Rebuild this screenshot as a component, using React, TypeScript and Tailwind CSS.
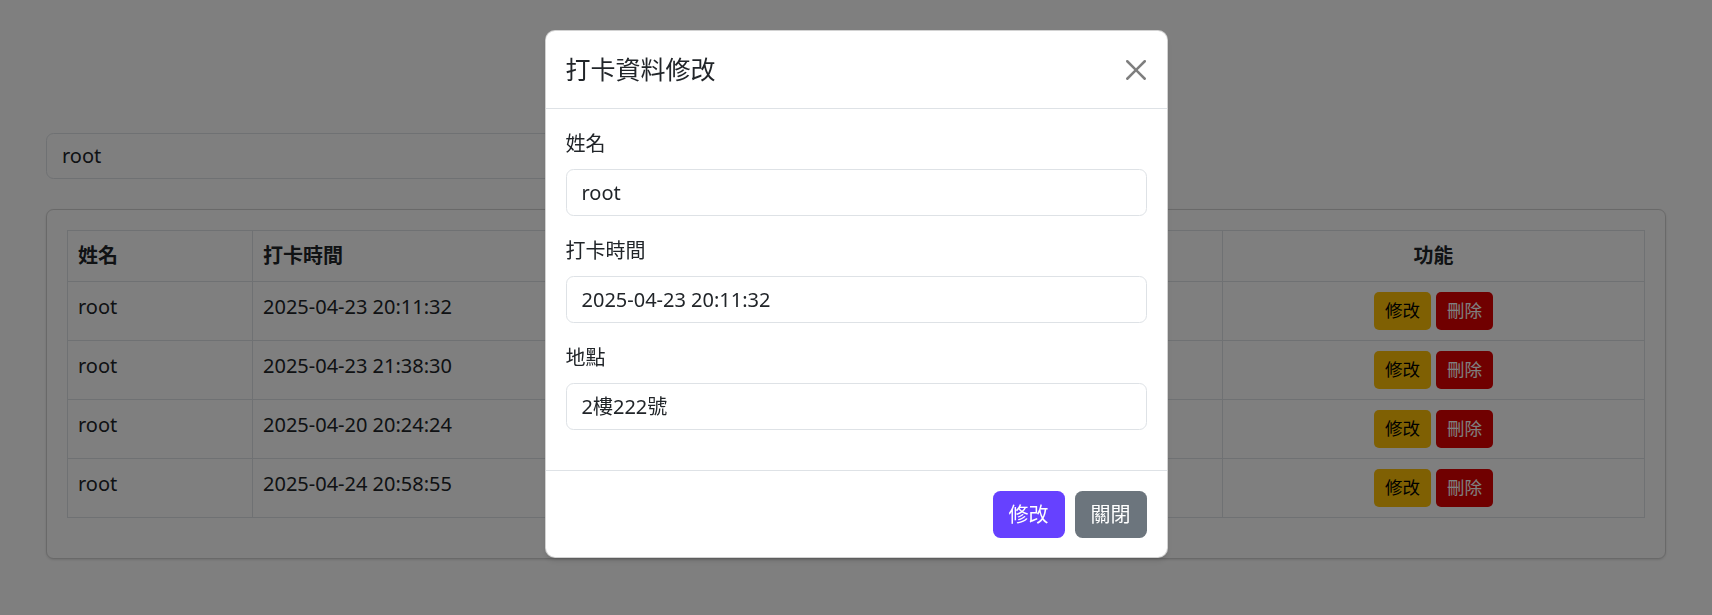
const records = [
  { name: "root", time: "2025-04-23 20:11:32", place: "2樓222號" },
  { name: "root", time: "2025-04-23 21:38:30", place: "2樓222號" },
  { name: "root", time: "2025-04-20 20:24:24", place: "2樓222號" },
  { name: "root", time: "2025-04-24 20:58:55", place: "2樓222號" },
];

function Field({ label, value }: { label: string; value: string }) {
  return (
    <div className="mb-[20px]">
      <label className="block text-[20px] leading-[30px] mb-[10px] text-[#212529]">
        {label}
      </label>
      <div className="h-[47px] border border-[#dee2e6] rounded-[7.5px] px-[15px] flex items-center text-[20px] text-[#212529]">
        {value}
      </div>
    </div>
  );
}

export default function App() {
  return (
    <div className="relative min-h-screen bg-white font-['Noto_Sans','Noto_Sans_CJK_TC',sans-serif] text-[#212529]">
      {/* page behind the modal */}
      <div className="px-[46px] pt-[133px] pb-[40px]">
        <div className="h-[46px] w-[800px] border border-[#dee2e6] rounded-[7.5px] px-[15px] flex items-center text-[20px]">
          root
        </div>

        <div className="mt-[30px] border border-black/[0.175] rounded-[7.5px] p-[20px] shadow-sm">
          <table className="w-full table-fixed border-collapse mb-[20px] text-[20px]">
            <colgroup>
              <col className="w-[185px]" />
              <col className="w-[485px]" />
              <col className="w-[485px]" />
              <col className="w-[422px]" />
            </colgroup>
            <thead>
              <tr>
                <th className="border border-[#dee2e6] p-[10px] leading-[30px] text-left font-bold">姓名</th>
                <th className="border border-[#dee2e6] p-[10px] leading-[30px] text-left font-bold">打卡時間</th>
                <th className="border border-[#dee2e6] p-[10px] leading-[30px] text-left font-bold">地點</th>
                <th className="border border-[#dee2e6] p-[10px] leading-[30px] text-center font-bold">功能</th>
              </tr>
            </thead>
            <tbody>
              {records.map((r, i) => (
                <tr key={i}>
                  <td className="border border-[#dee2e6] p-[10px] leading-[30px] align-top">{r.name}</td>
                  <td className="border border-[#dee2e6] p-[10px] leading-[30px] align-top">{r.time}</td>
                  <td className="border border-[#dee2e6] p-[10px] leading-[30px] align-top">{r.place}</td>
                  <td className="border border-[#dee2e6] p-[10px] align-top">
                    <div className="flex justify-center gap-[5px]">
                      <button className="h-[38px] px-[11px] rounded-[5px] bg-[#ffc107] text-black text-[17.5px] leading-none">
                        修改
                      </button>
                      <button className="h-[38px] px-[11px] rounded-[5px] bg-[#e00000] text-white text-[17.5px] leading-none">
                        刪除
                      </button>
                    </div>
                  </td>
                </tr>
              ))}
            </tbody>
          </table>
        </div>
      </div>

      {/* modal overlay */}
      <div className="fixed inset-0 bg-black/50">
        <div className="mx-auto mt-[30px] w-[623px] bg-white border border-black/[0.175] rounded-[10px] shadow-md">
          <div className="flex items-center justify-between p-[20px] border-b border-[#dee2e6]">
            <h5 className="text-[25px] leading-[37px] font-normal">打卡資料修改</h5>
            <svg width="20" height="20" viewBox="0 0 16 16" className="opacity-50 mr-[1px]">
              <path
                fill="#000"
                d="M.293.293a1 1 0 0 1 1.414 0L8 6.586 14.293.293a1 1 0 1 1 1.414 1.414L9.414 8l6.293 6.293a1 1 0 0 1-1.414 1.414L8 9.414l-6.293 6.293a1 1 0 0 1-1.414-1.414L6.586 8 .293 1.707a1 1 0 0 1 0-1.414z"
              />
            </svg>
          </div>

          <div className="p-[20px] pb-0">
            <Field label="姓名" value="root" />
            <Field label="打卡時間" value="2025-04-23 20:11:32" />
            <Field label="地點" value="2樓222號" />
            <div className="h-[20px]" />
          </div>

          <div className="flex justify-end gap-[10px] px-[20px] pt-[20px] pb-[19px] border-t border-[#dee2e6]">
            <button className="h-[47px] px-[16px] rounded-[7.5px] bg-[#6641ff] text-white text-[20px]">
              修改
            </button>
            <button className="h-[47px] px-[16px] rounded-[7.5px] bg-[#6c757d] text-white text-[20px]">
              關閉
            </button>
          </div>
        </div>
      </div>
    </div>
  );
}
